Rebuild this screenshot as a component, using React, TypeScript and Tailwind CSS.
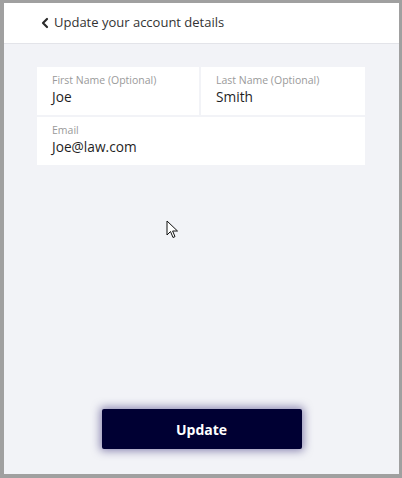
import { ChevronLeft } from "lucide-react";

// Account details form inside a framed window
function Field({ label, value }: { label: string; value: string }) {
  return (
    <div className="flex flex-col bg-white px-[15px] pt-[7px] pb-[9px]">
      <span className="text-[10.5px] leading-[13px] text-[#9a9a9a]">{label}</span>
      <span className="mt-[1px] text-[13.7px] leading-[18px] text-[#1f1f1f]">{value}</span>
    </div>
  );
}

export default function App() {
  return (
    <div
      className="relative flex h-[478px] w-[402px] flex-col border-t-[3px] border-r-[3px] border-b-4 border-l-4 border-[#a0a0a0] bg-[#f2f3f7]"
      style={{ fontFamily: "'Open Sans', 'Noto Sans', sans-serif" }}
    >
      {/* header */}
      <div className="flex h-[41px] shrink-0 items-center border-b border-[#e3e4e9] bg-white pl-[33px]">
        <ChevronLeft size={16} strokeWidth={3.2} className="text-[#2a2a2a]" />
        <span className="ml-[1px] text-[13px] text-[#333]">Update your account details</span>
      </div>

      {/* form */}
      <div className="flex flex-1 flex-col px-[33px] pt-[23px]">
        <div className="flex w-[328px] flex-col gap-[2px]">
          <div className="grid grid-cols-[162px_164px] gap-[2px]">
            <Field label="First Name (Optional)" value="Joe" />
            <Field label="Last Name (Optional)" value="Smith" />
          </div>
          <Field label="Email" value="Joe@law.com" />
        </div>

        {/* mouse pointer */}
        <svg width="14" height="20" viewBox="0 0 14 20" className="mt-[55px] ml-[129px]">
          <path
            d="M1 1 L1 15 L4.5 11.5 L7 17.5 L9 16.6 L6.6 11 L11.5 11 Z"
            fill="white"
            stroke="#111"
            strokeWidth="1"
            strokeLinejoin="round"
          />
        </svg>

        <div className="mt-auto mb-[25px] flex justify-center">
          <button className="h-[40px] w-[200px] rounded-[2px] bg-[#000033] text-[14px] font-bold text-white shadow-[0_0_8px_2px_rgba(40,30,110,0.5)]">
            Update
          </button>
        </div>
      </div>
    </div>
  );
}
